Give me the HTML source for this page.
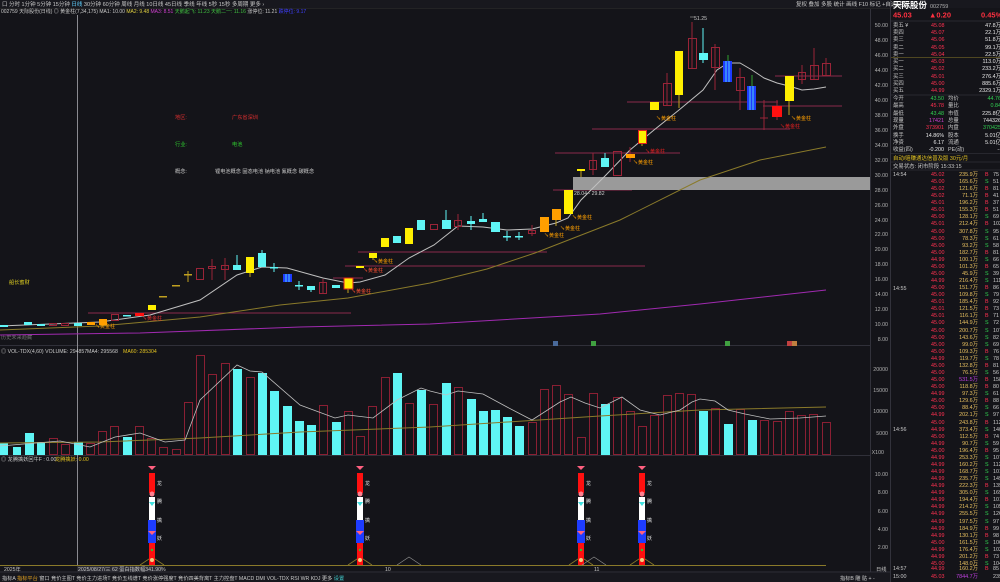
<!DOCTYPE html>
<html><head><meta charset="utf-8">
<style>
html,body{margin:0;padding:0;background:#141419;}
svg{display:block;font-family:"Liberation Sans","Noto Sans CJK SC",sans-serif;}
</style></head><body>
<svg width="1000" height="582" viewBox="0 0 1000 582" xmlns="http://www.w3.org/2000/svg">
<rect width="1000" height="582" fill="#141419"/>
<!-- top toolbar -->
<rect x="0" y="0" width="1000" height="8" fill="#18181e"/>
<g font-size="5.5" fill="#c8c8c8">
<text x="2" y="6">口 分时 1分钟 5分钟 15分钟 <tspan fill="#5fd0ff">日线</tspan> 30分钟 60分钟 周线 月线 10日线 45日线 季线 年线 5秒 15秒 多周期 更多 ›</text>
<text x="796" y="6">复权  叠加  多股  统计  画线  F10  标记  +自选  返回</text>
</g>
<line x1="0" y1="8.5" x2="890" y2="8.5" stroke="#333" stroke-width="0.6"/>
<text x="1" y="13" font-size="5" fill="#c8c8c8">002759 天际股份(日线) ◎ 黄金柱(7,34,175) MA1: 10.00 <tspan fill="#e0d040">MA2: 9.48</tspan> <tspan fill="#d040d0">MA3: 8.51</tspan> <tspan fill="#40c040">天鹅起飞: 11.23 天鹅二一: 11.16</tspan> 涨停位: 11.21 <tspan fill="#4040ff">跌停位: 9.17</tspan></text>
<!-- chart frame -->
<line x1="870.5" y1="9" x2="870.5" y2="572" stroke="#3a3a44" stroke-width="0.8"/>
<line x1="890.5" y1="0" x2="890.5" y2="582" stroke="#3a3a44" stroke-width="0.8"/>
<line x1="0" y1="345.5" x2="870" y2="345.5" stroke="#3a3a44" stroke-width="0.8"/>
<line x1="0" y1="455.5" x2="870" y2="455.5" stroke="#3a3a44" stroke-width="0.8"/>
<line x1="0" y1="572" x2="890" y2="572" stroke="#3a3a44" stroke-width="0.8"/>
<line x1="77.5" y1="15" x2="77.5" y2="572" stroke="#8a8a90" stroke-width="1"/>
<!-- price axis labels -->
<g font-size="5.3" fill="#b0b0b0" text-anchor="end">
<text x="888" y="27">50.00</text><text x="888" y="42">48.00</text><text x="888" y="57">46.00</text><text x="888" y="72">44.00</text><text x="888" y="87">42.00</text><text x="888" y="102">40.00</text><text x="888" y="117">38.00</text><text x="888" y="132">36.00</text><text x="888" y="147">34.00</text><text x="888" y="162">32.00</text><text x="888" y="177">30.00</text><text x="888" y="192">28.00</text><text x="888" y="207">26.00</text><text x="888" y="222">24.00</text><text x="888" y="236">22.00</text><text x="888" y="251">20.00</text><text x="888" y="266">18.00</text><text x="888" y="281">16.00</text><text x="888" y="296">14.00</text><text x="888" y="311">12.00</text><text x="888" y="326">10.00</text><text x="888" y="341">8.00</text>
<text x="888" y="371">20000</text><text x="888" y="392">15000</text><text x="888" y="413">10000</text><text x="888" y="435">5000</text>
<text x="884" y="454">X100</text>
<text x="888" y="476">10.00</text><text x="888" y="494">8.00</text><text x="888" y="513">6.00</text><text x="888" y="531">4.00</text><text x="888" y="549">2.00</text>
</g>
<!-- left texts -->
<g font-size="5.2">
<text x="175" y="119" fill="#e03030">地区:</text><text x="232" y="119" fill="#e03030">广东省深圳</text>
<text x="175" y="146" fill="#30d030">行业:</text><text x="232" y="146" fill="#30d030">电池</text>
<text x="175" y="173" fill="#c8c8c8">概念:</text><text x="215" y="173" fill="#c8c8c8">锂电池概念 固态电池 钠电池 氟概念 碳概念</text>
<text x="9" y="284" fill="#e0d020">船长蜜财</text>
<text x="1" y="339" fill="#707070">历史未来趋藏</text>
<text x="694" y="20" fill="#c8c8c8">51.25</text>
</g>
<line x1="690" y1="17" x2="694" y2="17" stroke="#c8c8c8" stroke-width="0.5"/>
<!-- horizontal pink lines -->
<g stroke="#8a2a4a" stroke-width="1">
<line x1="88" y1="313" x2="351" y2="313"/>
<line x1="358" y1="252" x2="547" y2="252"/>
<line x1="345" y1="266" x2="645" y2="266"/>
<line x1="333" y1="278" x2="363" y2="278"/>
<line x1="553" y1="190" x2="632" y2="190"/>
<line x1="555" y1="153" x2="680" y2="153"/>
<line x1="592" y1="129" x2="790" y2="129"/>
<line x1="627" y1="102" x2="778" y2="102"/>
<line x1="763" y1="106" x2="842" y2="106"/>
<line x1="775" y1="76" x2="842" y2="76"/>
</g>
<!-- gray zone -->
<rect x="573" y="177" width="297" height="13" fill="#9a9a9a"/>
<text x="574" y="195" font-size="5.2" fill="#d0d0d0">28.04 - 29.82</text>
<!-- MA lines -->
<polyline fill="none" stroke="#a02ab0" stroke-width="1" points="0,335 140,333 300,327 430,324 600,314 700,304 826,290"/>
<polyline fill="none" stroke="#8a7a2a" stroke-width="1" points="0,330 100,326 200,317 280,305 348,298 430,283 487,269 535,253 620,220 700,180 760,160 826,147"/>
<polyline fill="none" stroke="#c0c0c0" stroke-width="1" points="0,326 100,322 150,315 200,300 237,275 262,267 287,268 323,278 348,283 360,282 385,275 409,258 434,245 458,226 483,227 507,230 532,229 556,223 568,218 581,200 605,176 630,150 654,130 679,110 703,90 717,70 728,63 740,63 752,70 764,78 777,83 789,86 802,90 814,89 826,87"/>
<!-- candles: wicks -->
<g stroke-width="1">
<line x1="188" y1="271" x2="188" y2="282" stroke="#c0a020"/>
<line x1="212" y1="259" x2="212" y2="280" stroke="#9a2438"/>
<line x1="225" y1="258" x2="225" y2="280" stroke="#9a2438"/>
<line x1="237" y1="255" x2="237" y2="270" stroke="#5ff5f5"/>
<line x1="250" y1="257" x2="250" y2="277" stroke="#c0a020"/>
<line x1="262" y1="250" x2="262" y2="267" stroke="#5ff5f5"/>
<line x1="274" y1="263" x2="274" y2="272" stroke="#5ff5f5"/>
<line x1="299" y1="281" x2="299" y2="290" stroke="#5ff5f5"/>
<line x1="311" y1="286" x2="311" y2="292" stroke="#5ff5f5"/>
<line x1="323" y1="279" x2="323" y2="294" stroke="#9a2438"/>
<line x1="348" y1="278" x2="348" y2="293" stroke="#c0a020"/>
<line x1="373" y1="253" x2="373" y2="260" stroke="#c0a020"/>
<line x1="446" y1="210" x2="446" y2="229" stroke="#5ff5f5"/>
<line x1="458" y1="214" x2="458" y2="230" stroke="#9a2438"/>
<line x1="471" y1="216" x2="471" y2="230" stroke="#5ff5f5"/>
<line x1="483" y1="213" x2="483" y2="222" stroke="#5ff5f5"/>
<line x1="507" y1="231" x2="507" y2="241" stroke="#5ff5f5"/>
<line x1="519" y1="232" x2="519" y2="240" stroke="#5ff5f5"/>
<line x1="532" y1="225" x2="532" y2="236" stroke="#9a2438"/>
<line x1="556" y1="209" x2="556" y2="226" stroke="#c0a020"/>
<line x1="581" y1="170" x2="581" y2="177" stroke="#c0a020"/>
<line x1="593" y1="153" x2="593" y2="175" stroke="#9a2438"/>
<line x1="605" y1="153" x2="605" y2="167" stroke="#5ff5f5"/>
<line x1="630" y1="147" x2="630" y2="162" stroke="#9a2438"/>
<line x1="642" y1="130" x2="642" y2="146" stroke="#c0a020"/>
<line x1="667" y1="73" x2="667" y2="105" stroke="#9a2438"/>
<line x1="679" y1="51" x2="679" y2="108" stroke="#c0a020"/>
<line x1="692" y1="22" x2="692" y2="68" stroke="#9a2438"/>
<line x1="703" y1="28" x2="703" y2="63" stroke="#5ff5f5"/>
<line x1="715" y1="44" x2="715" y2="90" stroke="#9a2438"/>
<line x1="728" y1="55" x2="728" y2="82" stroke="#30a030"/>
<line x1="740" y1="68" x2="740" y2="110" stroke="#9a2438"/>
<line x1="752" y1="75" x2="752" y2="110" stroke="#30a030"/>
<line x1="764" y1="100" x2="764" y2="130" stroke="#9a2438"/>
<line x1="777" y1="100" x2="777" y2="120" stroke="#9a2438"/>
<line x1="789" y1="76" x2="789" y2="115" stroke="#c0a020"/>
<line x1="802" y1="65" x2="802" y2="84" stroke="#9a2438"/>
<line x1="814" y1="48" x2="814" y2="80" stroke="#9a2438"/>
<line x1="826" y1="58" x2="826" y2="75" stroke="#9a2438"/>
</g>
<!-- candle bodies -->
<g>
<g fill="#5ff5f5">
<rect x="0" y="325" width="8" height="2"/><rect x="24" y="322" width="8" height="3"/><rect x="37" y="324" width="8" height="2"/><rect x="74" y="323" width="8" height="3"/><rect x="123" y="315" width="8" height="1.5"/><rect x="233" y="265" width="8" height="5"/><rect x="258" y="253" width="8" height="14"/><rect x="270" y="267" width="8" height="1.5"/><rect x="295" y="285" width="8" height="1.5"/><rect x="307" y="286" width="8" height="4"/><rect x="332" y="285" width="8" height="3"/><rect x="393" y="236" width="8" height="7"/><rect x="417" y="220" width="8" height="10"/><rect x="442" y="220" width="9" height="9"/><rect x="467" y="221" width="8" height="3"/><rect x="479" y="219" width="8" height="3"/><rect x="491" y="222" width="9" height="10"/><rect x="503" y="236" width="8" height="1.5"/><rect x="515" y="236" width="8" height="1.5"/><rect x="601" y="158" width="8" height="9"/><rect x="699" y="53" width="9" height="7"/>
</g>
<g fill="none" stroke="#9a2438" stroke-width="1">
<rect x="49.5" y="323.5" width="7" height="2"/><rect x="61.5" y="323.5" width="7" height="2"/><rect x="111.5" y="314.5" width="7" height="6"/><rect x="196.5" y="268.5" width="7" height="11"/><rect x="208.5" y="266.5" width="7" height="2"/><rect x="221.5" y="265.5" width="7" height="4"/><rect x="319.5" y="282.5" width="7" height="11"/><rect x="430.5" y="224.5" width="7" height="5"/><rect x="454.5" y="220.5" width="7" height="6"/><rect x="528.5" y="230.5" width="7" height="3"/><rect x="589.5" y="160.5" width="7" height="9"/><rect x="613.5" y="151.5" width="8" height="24"/><rect x="663.5" y="83.5" width="8" height="22"/><rect x="688.5" y="38.5" width="8" height="30"/><rect x="711.5" y="47.5" width="8" height="20"/><rect x="736.5" y="77.5" width="8" height="13"/><rect x="798.5" y="72.5" width="7" height="7"/><rect x="810.5" y="65.5" width="8" height="14"/><rect x="822.5" y="63.5" width="8" height="12"/>
<line x1="760" y1="118" x2="768" y2="118"/>
</g>
<g fill="#ff9f00">
<rect x="87" y="322" width="8" height="3"/><rect x="99" y="319" width="8" height="6"/><rect x="540" y="217" width="9" height="15"/><rect x="552" y="209" width="9" height="11"/><rect x="626" y="154" width="9" height="4"/>
</g>
<g fill="#ffef00">
<rect x="148" y="305" width="8" height="5"/><rect x="246" y="257" width="8" height="16"/><rect x="356" y="266" width="8" height="2"/><rect x="369" y="253" width="8" height="5"/><rect x="381" y="238" width="8" height="9"/><rect x="405" y="228" width="8" height="16"/><rect x="564" y="190" width="9" height="24"/><rect x="577" y="169" width="8" height="2"/><rect x="650" y="102" width="9" height="8"/><rect x="675" y="51" width="8" height="44"/><rect x="785" y="76" width="9" height="25"/>
</g>
<rect x="344" y="278" width="9" height="11" fill="#ffef00" stroke="#e02020" stroke-width="1"/>
<rect x="638.5" y="130.5" width="8" height="13" fill="#ffef00" stroke="#e02020" stroke-width="1"/>
<rect x="159" y="296" width="8" height="1.5" fill="#c0a020"/><rect x="172" y="285" width="8" height="1.5" fill="#c0a020"/><rect x="184" y="274" width="8" height="1.5" fill="#c0a020"/>
<rect x="135" y="313" width="9" height="3" fill="#ff1010"/><rect x="772" y="106" width="10" height="11" fill="#ff1010"/>
<g fill="#1e3cff"><rect x="283" y="274" width="9" height="8"/><rect x="723" y="61" width="9" height="21"/><rect x="747" y="86" width="9" height="24"/></g>
<g stroke="#5ff5f5" stroke-width="0.8"><line x1="286" y1="274" x2="286" y2="282"/><line x1="289" y1="274" x2="289" y2="282"/><line x1="726" y1="61" x2="726" y2="82"/><line x1="729" y1="61" x2="729" y2="82"/><line x1="750" y1="86" x2="750" y2="110"/><line x1="753" y1="86" x2="753" y2="110"/></g>
</g>
<!-- golden labels -->
<g font-size="5" fill="#ffa000">
<text x="95" y="328">↘黄金柱</text><text x="142" y="320" fill="#e03030">↘黄金柱</text>
<text x="351" y="293" fill="#ff5030">↘黄金柱</text><text x="363" y="272" fill="#ff5030">↘黄金柱</text><text x="373" y="263">↘黄金柱</text>
<text x="544" y="237">↘黄金柱</text><text x="560" y="230">↘黄金柱</text><text x="572" y="219">↘黄金柱</text>
<text x="633" y="164">↘黄金柱</text><text x="645" y="153" fill="#e02020">↘黄金柱</text><text x="656" y="120">↘黄金柱</text>
<text x="780" y="128" fill="#e02020">↘黄金柱</text><text x="791" y="120">↘黄金柱</text>
</g>
<!-- event markers -->
<g><rect x="553" y="341" width="5" height="5" fill="#4a6a9a"/><rect x="591" y="341" width="5" height="5" fill="#40a040"/><rect x="725" y="341" width="5" height="5" fill="#40a040"/><rect x="787" y="341" width="5" height="5" fill="#c04040"/><rect x="792" y="341" width="5" height="5" fill="#c08040"/></g>
<!-- volume header -->
<g font-size="5.2">
<text x="1" y="353" fill="#c8c8c8">◎ VOL-TDX(4,60) VOLUME: 294857</text>
<text x="87" y="353" fill="#c8c8c8">MA4: 295568</text>
<text x="123" y="353" fill="#e0c020">MA60: 285304</text>
</g>
<!-- volume bars -->
<g fill="#5ff5f5">
<rect x="0" y="443" width="8" height="12"/><rect x="13" y="447" width="8" height="8"/><rect x="25" y="433" width="9" height="22"/><rect x="37" y="442" width="8" height="13"/><rect x="74" y="442" width="9" height="13"/><rect x="123" y="437" width="9" height="18"/><rect x="233" y="369" width="9" height="86"/><rect x="258" y="373" width="9" height="82"/><rect x="270" y="391" width="9" height="64"/><rect x="283" y="406" width="9" height="49"/><rect x="295" y="421" width="9" height="34"/><rect x="307" y="425" width="9" height="30"/><rect x="332" y="422" width="9" height="33"/><rect x="393" y="373" width="9" height="82"/><rect x="417" y="390" width="9" height="65"/><rect x="442" y="383" width="9" height="72"/><rect x="467" y="399" width="9" height="56"/><rect x="479" y="411" width="9" height="44"/><rect x="491" y="410" width="9" height="45"/><rect x="503" y="417" width="9" height="38"/><rect x="515" y="426" width="9" height="29"/><rect x="601" y="404" width="9" height="51"/><rect x="699" y="411" width="9" height="44"/><rect x="724" y="424" width="9" height="31"/><rect x="748" y="420" width="9" height="35"/>
</g>
<g fill="none" stroke="#8a1f33" stroke-width="1">
<rect x="49.5" y="438.5" width="8" height="16"/><rect x="61.5" y="444.5" width="8" height="10"/><rect x="86.5" y="443.5" width="8" height="11"/><rect x="98.5" y="431.5" width="8" height="23"/><rect x="110.5" y="426.5" width="8" height="28"/><rect x="135.5" y="426.5" width="8" height="28"/><rect x="147.5" y="438.5" width="8" height="16"/><rect x="159.5" y="447.5" width="8" height="7"/><rect x="172.5" y="449.5" width="8" height="5"/><rect x="184.5" y="402.5" width="8" height="52"/><rect x="196.5" y="355.5" width="8" height="99"/><rect x="208.5" y="374.5" width="8" height="80"/><rect x="221.5" y="363.5" width="8" height="91"/><rect x="246.5" y="377.5" width="8" height="77"/><rect x="319.5" y="405.5" width="8" height="49"/><rect x="344.5" y="411.5" width="8" height="43"/><rect x="356.5" y="436.5" width="8" height="18"/><rect x="368.5" y="406.5" width="8" height="48"/><rect x="381.5" y="377.5" width="8" height="77"/><rect x="405.5" y="403.5" width="8" height="51"/><rect x="429.5" y="404.5" width="8" height="50"/><rect x="454.5" y="387.5" width="8" height="67"/><rect x="528.5" y="422.5" width="8" height="32"/><rect x="540.5" y="389.5" width="8" height="65"/><rect x="552.5" y="385.5" width="8" height="69"/><rect x="564.5" y="394.5" width="8" height="60"/><rect x="577.5" y="437.5" width="8" height="17"/><rect x="589.5" y="393.5" width="8" height="61"/><rect x="613.5" y="397.5" width="8" height="57"/><rect x="626.5" y="411.5" width="8" height="43"/><rect x="638.5" y="426.5" width="8" height="28"/><rect x="650.5" y="415.5" width="8" height="39"/><rect x="663.5" y="395.5" width="8" height="59"/><rect x="675.5" y="393.5" width="8" height="61"/><rect x="687.5" y="394.5" width="8" height="60"/><rect x="711.5" y="408.5" width="8" height="46"/><rect x="736.5" y="409.5" width="8" height="45"/><rect x="760.5" y="420.5" width="8" height="34"/><rect x="773.5" y="421.5" width="8" height="33"/><rect x="785.5" y="411.5" width="8" height="43"/><rect x="797.5" y="415.5" width="8" height="39"/><rect x="809.5" y="414.5" width="8" height="40"/><rect x="822.5" y="422.5" width="8" height="32"/>
</g>
<polyline fill="none" stroke="#8a7a2a" stroke-width="1" points="0,443 100,442 200,438 300,432 430,427 600,416 700,410 826,407"/>
<polyline fill="none" stroke="#c0c0c0" stroke-width="0.8" points="0,446 60,441 90,447 115,437 140,433 165,442 185,440 200,400 237,365 250,371 262,372 300,405 335,418 348,415 373,418 397,400 421,388 430,391 446,395 458,391 483,394 507,407 532,420 560,402 571,397 585,403 600,408 622,397 640,410 660,415 680,410 692,402 700,399 715,401 728,410 745,414 770,419 800,418 826,416"/>
<!-- bottom indicator -->
<g font-size="5.2"><text x="1" y="461" fill="#c8c8c8">◎ 龙腾擒妖回牛F : 0.00</text><text x="55" y="461" fill="#e0c020">龙腾擒妖: 0.00</text></g>
<line x1="0" y1="565.5" x2="826" y2="565.5" stroke="#8a7a2a" stroke-width="1"/>
<g id="p1">
<polyline fill="none" stroke="#8a7a2a" stroke-width="0.8" points="140,565 152,557 164,565"/>
<rect x="149" y="473" width="6" height="20" fill="#ff1010"/>
<rect x="149" y="497" width="6" height="23" fill="#ffffff"/>
<rect x="148" y="520" width="8" height="23" fill="#1e3cff"/>
<rect x="149" y="543" width="6" height="22" fill="#ff1010"/>
<path d="M148,466 h8 l-4,4 z" fill="#ff6080"/><circle cx="152" cy="494" r="2.5" fill="#ff8090"/><path d="M149,502 h6 l-3,4 z" fill="#40e0e0"/><path d="M148,531 h8 l-4,4 z" fill="#ff6080"/><circle cx="152" cy="550" r="1.2" fill="#30c030"/><circle cx="152" cy="560" r="2" fill="#f0d080"/>
<g font-size="5" fill="#e0e0e0"><text x="157" y="485">龙</text><text x="157" y="503">腾</text><text x="157" y="522">擒</text><text x="157" y="540">妖</text></g>
</g>
<use href="#p1" x="208"/><use href="#p1" x="429"/><use href="#p1" x="490"/>
<polyline fill="none" stroke="#909090" stroke-width="0.7" points="397,565 409,557 421,565"/>
<polyline fill="none" stroke="#909090" stroke-width="0.7" points="582,565 594,557 606,565"/>
<!-- time axis -->
<g font-size="5.2" fill="#c8c8c8">
<text x="4" y="571">2025年</text>
<rect x="77" y="566" width="85" height="6" fill="#2a2a32"/>
<text x="78" y="571">2025/08/27/三 62 蛋白指数幅341.90%</text>
<text x="385" y="571">10</text><text x="594" y="571">11</text>
<text x="876" y="571">日线</text>
</g>
<!-- bottom tabs -->
<rect x="0" y="573" width="890" height="9" fill="#18181e"/>
<g font-size="5.2" fill="#c8c8c8">
<text x="2" y="580">指标A <tspan fill="#e0a020">指标平台</tspan> 窗口 竞价主图T 竞价主力进场T 竞价五线谱T 竞价涨停强度T 竞价四美背离T 主力控盘T MACD DMI VOL-TDX RSI WR KDJ 更多 <tspan fill="#40d0d0">设置</tspan></text>
<text x="840" y="580">指标B  雕 骷   +  -</text>
</g>
<!-- right panel -->
<g font-size="6">
<text x="893" y="8" font-size="8.5" font-weight="bold" fill="#ffffff">天际股份</text>
<text x="930" y="8" font-size="5.5" fill="#b0b0b0">002759</text>
<text x="893" y="17.5" font-size="7.5" font-weight="bold" fill="#ff3040">45.03</text>
<text x="929" y="17.5" font-size="7.5" font-weight="bold" fill="#ff3040">▲0.20</text>
<text x="981" y="17.5" font-size="7.5" font-weight="bold" fill="#ff3040">0.45%</text>
</g>
<g stroke="#3a3a44" stroke-width="0.6"><line x1="891" y1="21" x2="1000" y2="21"/><line x1="891" y1="95" x2="1000" y2="95"/><line x1="891" y1="153.5" x2="1000" y2="153.5"/><line x1="891" y1="162" x2="1000" y2="162"/><line x1="891" y1="170" x2="1000" y2="170"/></g>
<line x1="891" y1="57.5" x2="1000" y2="57.5" stroke="#8a7a2a" stroke-width="0.6"/>
<g font-size="5.4">
<g fill="#c8c8c8"><text x="893" y="27">卖五 ¥</text><text x="893" y="34">卖四</text><text x="893" y="41">卖三</text><text x="893" y="49">卖二</text><text x="893" y="56">卖一</text><text x="893" y="63">买一</text><text x="893" y="70">买二</text><text x="893" y="78">买三</text><text x="893" y="85">买四</text><text x="893" y="92">买五</text></g>
<g fill="#ff3050"><text x="931" y="27">45.08</text><text x="931" y="34">45.07</text><text x="931" y="41">45.06</text><text x="931" y="49">45.05</text><text x="931" y="56">45.04</text><text x="931" y="63">45.03</text><text x="931" y="70">45.02</text><text x="931" y="78">45.01</text><text x="931" y="85">45.00</text><text x="931" y="92">44.99</text></g>
<g fill="#e8e8e8" text-anchor="end"><text x="1001" y="27">47.8万</text><text x="1001" y="34">22.1万</text><text x="1001" y="41">51.8万</text><text x="1001" y="49">99.1万</text><text x="1001" y="56">22.5万</text><text x="1001" y="63">113.0万</text><text x="1001" y="70">233.2万</text><text x="1001" y="78">276.4万</text><text x="1001" y="85">885.6万</text><text x="1001" y="92">2329.1万</text></g>
<g fill="#c8c8c8"><text x="893" y="100">今开</text><text x="893" y="107">最高</text><text x="893" y="115">最低</text><text x="893" y="122">现量</text><text x="893" y="129">外盘</text><text x="893" y="137">换手</text><text x="893" y="144">净资</text><text x="893" y="151">收益(四)</text>
<text x="948" y="100">均价</text><text x="948" y="107">量比</text><text x="948" y="115">市值</text><text x="948" y="122">总量</text><text x="948" y="129">内盘</text><text x="948" y="137">股本</text><text x="948" y="144">流通</text><text x="948" y="151">PE(动)</text></g>
<g text-anchor="end"><text x="944" y="100" fill="#30d050">43.50</text><text x="944" y="107" fill="#ff3050">45.78</text><text x="944" y="115" fill="#30d050">43.48</text><text x="944" y="122" fill="#d040d0">17421</text><text x="944" y="129" fill="#ff3050">373901</text><text x="944" y="137" fill="#e8e8e8">14.86%</text><text x="944" y="144" fill="#e8e8e8">6.17</text><text x="944" y="151" fill="#e8e8e8">-0.200</text>
<text x="1001" y="100" fill="#30d050">44.76</text><text x="1001" y="107" fill="#30d050">0.84</text><text x="1001" y="115" fill="#e8e8e8">225.8亿</text><text x="1001" y="122" fill="#e8e8e8">744326</text><text x="1001" y="129" fill="#30d050">370425</text><text x="1001" y="137" fill="#e8e8e8">5.01亿</text><text x="1001" y="144" fill="#e8e8e8">5.01亿</text><text x="1001" y="151" fill="#e8e8e8">--</text></g>
<text x="893" y="160" fill="#e0c020">自动/赔赚通达信普及版    30元/月</text>
<text x="893" y="168" fill="#c8c8c8">交易状态: 闭市阶段 15:33:15</text>
</g>
<!-- tick list -->
<g font-size="5.4">
<g fill="#c8c8c8"><text x="893" y="176">14:54</text><text x="893" y="290">14:55</text><text x="893" y="431">14:56</text><text x="893" y="570">14:57</text><text x="893" y="578">15:00</text></g>
<g fill="#ff3050">
<text x="931" y="176">45.02</text><text x="931" y="183">45.00</text><text x="931" y="190">45.02</text><text x="931" y="197">45.02</text><text x="931" y="204">45.01</text><text x="931" y="211">45.01</text><text x="931" y="218">45.00</text><text x="931" y="225">45.01</text><text x="931" y="233">45.00</text><text x="931" y="240">45.00</text><text x="931" y="247">45.00</text><text x="931" y="254">45.00</text><text x="931" y="261">44.99</text><text x="931" y="268">45.00</text><text x="931" y="275">45.00</text><text x="931" y="282">44.99</text><text x="931" y="289">45.00</text><text x="931" y="296">45.00</text><text x="931" y="303">45.01</text><text x="931" y="310">45.01</text><text x="931" y="317">45.01</text><text x="931" y="324">45.00</text><text x="931" y="332">45.00</text><text x="931" y="339">45.00</text><text x="931" y="346">45.00</text><text x="931" y="353">45.00</text><text x="931" y="360">44.99</text><text x="931" y="367">45.00</text><text x="931" y="374">45.00</text><text x="931" y="381">45.00</text><text x="931" y="388">45.00</text><text x="931" y="395">44.99</text><text x="931" y="402">45.00</text><text x="931" y="409">45.00</text><text x="931" y="416">44.99</text><text x="931" y="424">45.00</text><text x="931" y="431">44.99</text><text x="931" y="438">45.00</text><text x="931" y="445">44.99</text><text x="931" y="452">45.00</text><text x="931" y="459">44.99</text><text x="931" y="466">44.99</text><text x="931" y="473">44.99</text><text x="931" y="480">44.99</text><text x="931" y="487">44.99</text><text x="931" y="494">44.99</text><text x="931" y="501">44.99</text><text x="931" y="508">44.99</text><text x="931" y="515">44.99</text><text x="931" y="523">44.99</text><text x="931" y="530">44.99</text><text x="931" y="537">44.99</text><text x="931" y="544">45.00</text><text x="931" y="551">44.99</text><text x="931" y="558">44.99</text><text x="931" y="565">45.00</text><text x="931" y="570">44.99</text><text x="931" y="578">45.03</text>
</g>
<g fill="#e8c060" text-anchor="end">
<text x="978" y="176">235.9万</text><text x="978" y="183">165.6万</text><text x="978" y="190">121.6万</text><text x="978" y="197">71.1万</text><text x="978" y="204">196.2万</text><text x="978" y="211">155.3万</text><text x="978" y="218">128.1万</text><text x="978" y="225">212.4万</text><text x="978" y="233">307.8万</text><text x="978" y="240">78.3万</text><text x="978" y="247">93.2万</text><text x="978" y="254">182.7万</text><text x="978" y="261">100.1万</text><text x="978" y="268">101.3万</text><text x="978" y="275">45.9万</text><text x="978" y="282">216.4万</text><text x="978" y="289">151.7万</text><text x="978" y="296">109.8万</text><text x="978" y="303">185.4万</text><text x="978" y="310">121.5万</text><text x="978" y="317">116.1万</text><text x="978" y="324">144.9万</text><text x="978" y="332">200.7万</text><text x="978" y="339">143.6万</text><text x="978" y="346">99.0万</text><text x="978" y="353">109.3万</text><text x="978" y="360">119.7万</text><text x="978" y="367">132.8万</text><text x="978" y="374">76.5万</text><text x="978" y="381" fill="#c040e0">531.5万</text><text x="978" y="388">118.8万</text><text x="978" y="395">97.3万</text><text x="978" y="402">129.6万</text><text x="978" y="409">88.4万</text><text x="978" y="416">202.1万</text><text x="978" y="424">243.8万</text><text x="978" y="431">373.4万</text><text x="978" y="438">112.5万</text><text x="978" y="445">90.7万</text><text x="978" y="452">196.4万</text><text x="978" y="459">253.3万</text><text x="978" y="466">160.2万</text><text x="978" y="473">168.7万</text><text x="978" y="480">235.7万</text><text x="978" y="487">222.3万</text><text x="978" y="494">305.0万</text><text x="978" y="501">194.4万</text><text x="978" y="508">214.2万</text><text x="978" y="515">255.5万</text><text x="978" y="523">197.5万</text><text x="978" y="530">184.9万</text><text x="978" y="537">130.1万</text><text x="978" y="544">161.5万</text><text x="978" y="551">176.4万</text><text x="978" y="558">201.2万</text><text x="978" y="565">148.0万</text><text x="978" y="570">160.2万</text><text x="978" y="578" fill="#c040e0">7844.7万</text>
</g>
<g fill="#ff3050"><text x="985" y="176">B</text><text x="985" y="190">B</text><text x="985" y="197">B</text><text x="985" y="204">B</text><text x="985" y="211">B</text><text x="985" y="225">B</text><text x="985" y="254">B</text><text x="985" y="268">B</text><text x="985" y="289">B</text><text x="985" y="303">B</text><text x="985" y="310">B</text><text x="985" y="317">B</text><text x="985" y="353">B</text><text x="985" y="367">B</text><text x="985" y="381">B</text><text x="985" y="388">B</text><text x="985" y="402">B</text><text x="985" y="424">B</text><text x="985" y="438">B</text><text x="985" y="452">B</text><text x="985" y="487">B</text><text x="985" y="501">B</text><text x="985" y="530">B</text><text x="985" y="537">B</text><text x="985" y="558">B</text><text x="985" y="570">B</text></g>
<g fill="#30d050"><text x="985" y="183">S</text><text x="985" y="218">S</text><text x="985" y="233">S</text><text x="985" y="240">S</text><text x="985" y="247">S</text><text x="985" y="261">S</text><text x="985" y="275">S</text><text x="985" y="282">S</text><text x="985" y="296">S</text><text x="985" y="324">S</text><text x="985" y="332">S</text><text x="985" y="339">S</text><text x="985" y="346">S</text><text x="985" y="360">S</text><text x="985" y="374">S</text><text x="985" y="395">S</text><text x="985" y="409">S</text><text x="985" y="416">S</text><text x="985" y="431">S</text><text x="985" y="445">S</text><text x="985" y="459">S</text><text x="985" y="466">S</text><text x="985" y="473">S</text><text x="985" y="480">S</text><text x="985" y="494">S</text><text x="985" y="508">S</text><text x="985" y="515">S</text><text x="985" y="523">S</text><text x="985" y="544">S</text><text x="985" y="551">S</text><text x="985" y="565">S</text></g>
<g fill="#c8c8c8"><text x="993" y="176">75</text><text x="993" y="183">51</text><text x="993" y="190">81</text><text x="993" y="197">41</text><text x="993" y="204">37</text><text x="993" y="211">51</text><text x="993" y="218">69</text><text x="993" y="225">102</text><text x="993" y="233">95</text><text x="993" y="240">61</text><text x="993" y="247">58</text><text x="993" y="254">81</text><text x="993" y="261">66</text><text x="993" y="268">65</text><text x="993" y="275">39</text><text x="993" y="282">111</text><text x="993" y="289">86</text><text x="993" y="296">79</text><text x="993" y="303">92</text><text x="993" y="310">73</text><text x="993" y="317">71</text><text x="993" y="324">72</text><text x="993" y="332">107</text><text x="993" y="339">82</text><text x="993" y="346">69</text><text x="993" y="353">76</text><text x="993" y="360">78</text><text x="993" y="367">81</text><text x="993" y="374">56</text><text x="993" y="381">158</text><text x="993" y="388">80</text><text x="993" y="395">61</text><text x="993" y="402">88</text><text x="993" y="409">66</text><text x="993" y="416">97</text><text x="993" y="424">112</text><text x="993" y="431">140</text><text x="993" y="438">74</text><text x="993" y="445">59</text><text x="993" y="452">95</text><text x="993" y="459">107</text><text x="993" y="466">112</text><text x="993" y="473">101</text><text x="993" y="480">149</text><text x="993" y="487">139</text><text x="993" y="494">169</text><text x="993" y="501">101</text><text x="993" y="508">105</text><text x="993" y="515">126</text><text x="993" y="523">97</text><text x="993" y="530">99</text><text x="993" y="537">98</text><text x="993" y="544">106</text><text x="993" y="551">102</text><text x="993" y="558">73</text><text x="993" y="565">104</text><text x="993" y="570">85</text><text x="993" y="578">2394</text></g>
</g>
</svg>
</body></html>
